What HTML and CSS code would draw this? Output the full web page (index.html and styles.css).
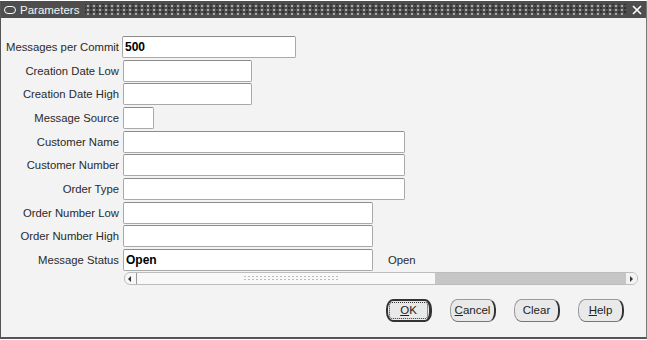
FILE: index.html
```html
<!DOCTYPE html>
<html lang="en">
  <head>
    <meta charset="UTF-8" />
    <title>Parameters</title>
    <link rel="stylesheet" href="styles.css">
  </head>
  <body>
    <div class="window">
      <div class="titlebar">
        <span class="title-icon"></span>
        <span class="title-text">Parameters</span>
        <span class="title-fill"></span>
        <span class="title-close">
          <svg width="10" height="10" viewBox="0 0 10 10">
            <path d="M1 1 L9 9 M9 1 L1 9" stroke="#fff" stroke-width="1.6" fill="none" />
          </svg>
        </span>
      </div>

      <div class="form">
        <div class="row">
          <label>Messages per Commit</label>
          <div class="field w-commit bold">500</div>
        </div>
        <div class="row">
          <label>Creation Date Low</label>
          <div class="field w-date"></div>
        </div>
        <div class="row">
          <label>Creation Date High</label>
          <div class="field w-date"></div>
        </div>
        <div class="row">
          <label>Message Source</label>
          <div class="field w-src"></div>
        </div>
        <div class="row">
          <label>Customer Name</label>
          <div class="field w-wide"></div>
        </div>
        <div class="row">
          <label>Customer Number</label>
          <div class="field w-wide"></div>
        </div>
        <div class="row">
          <label>Order Type</label>
          <div class="field w-wide"></div>
        </div>
        <div class="row">
          <label>Order Number Low</label>
          <div class="field w-num"></div>
        </div>
        <div class="row">
          <label>Order Number High</label>
          <div class="field w-num"></div>
        </div>
        <div class="row">
          <label>Message Status</label>
          <div class="field w-num bold">Open</div>
          <span class="extra">Open</span>
        </div>
      </div>

      <div class="scroll-row">
        <div class="scrollbar">
          <span class="arrow arrow-left"></span>
          <span class="thumb"><span class="grip"></span></span>
          <span class="track"></span>
          <span class="arrow arrow-right"></span>
        </div>
      </div>

      <div class="buttons">
        <button class="btn btn-default"><span class="focus"><u>O</u>K</span></button>
        <button class="btn"><u>C</u>ancel</button>
        <button class="btn">Clear</button>
        <button class="btn"><u>H</u>elp</button>
      </div>
    </div>
  </body>
</html>
```

FILE: styles.css
```css
body {
  margin: 0;
  background: #fff;
  font-family: "Liberation Sans", Arial, sans-serif;
  font-size: 12px;
  color: #222;
}

.window {
  width: 645px;
  height: 336px;
  margin-top: 1px;
  background: #f3f3f3;
  border-left: 1px solid #555;
  border-right: 1px solid #777;
  border-bottom: 2px solid #555;
}

.titlebar {
  height: 17px;
  background: #4e4e4e;
  display: flex;
  align-items: center;
  color: #fff;
}

.title-icon {
  width: 10px;
  height: 6px;
  margin-left: 3px;
  border: 1.5px solid #fff;
  border-radius: 5px;
}

.title-text {
  margin-left: 4px;
  font-size: 11.5px;
  color: #f4f4f4;
}

.title-fill {
  flex: 1;
  height: 11px;
  margin: 0 6px 0 6px;
  background-image:
    radial-gradient(circle, #a8a8a8 0.8px, transparent 1.1px),
    radial-gradient(circle, #2e2e2e 0.8px, transparent 1.1px);
  background-size: 6px 4px, 6px 4px;
  background-position: 0 0, 3px 2px;
}

.title-close {
  width: 12px;
  display: flex;
  align-items: center;
  margin-right: 2px;
}

.form {
  display: flex;
  flex-direction: column;
  gap: 1.67px;
  padding-top: 18px;
}

.row {
  display: flex;
  align-items: center;
  gap: 4px;
}

.row label {
  width: 118px;
  text-align: right;
  font-size: 11.3px;
  color: #2a2a2a;
  white-space: nowrap;
}

.field {
  height: 22px;
  line-height: 20px;
  background: #fff;
  border: 1px solid #a9a9a9;
  border-top-color: #8c8c8c;
  border-radius: 2px;
  padding-left: 2px;
  box-sizing: border-box;
}

.bold {
  font-weight: bold;
  color: #000;
}

.w-commit { width: 174px; margin-left: -1px; }
.w-date { width: 129px; }
.w-src { width: 31px; }
.w-wide { width: 282px; }
.w-num { width: 250px; }

.extra {
  margin-left: 11px;
  font-size: 11.3px;
  color: #2a2a2a;
}

.scroll-row {
  padding-left: 123px;
  margin-top: 1px;
}

.scrollbar {
  width: 514px;
  height: 13px;
  display: flex;
  border: 1px solid #bdbdbd;
  border-radius: 6px;
  box-sizing: border-box;
  background: #f7f7f7;
  overflow: hidden;
}

.arrow {
  width: 11px;
  position: relative;
}

.arrow::after {
  content: "";
  position: absolute;
  top: 3px;
  border-top: 3px solid transparent;
  border-bottom: 3px solid transparent;
}

.arrow-left {
  border-right: 1px solid #999;
}

.arrow-left::after {
  left: 3px;
  border-right: 3px solid #333;
}

.arrow-right {
  background: #f3f3f3;
}

.arrow-right::after {
  left: 4px;
  border-left: 3px solid #333;
}

.thumb {
  width: 298px;
  display: flex;
  justify-content: center;
  align-items: center;
  background: #f8f8f8;
}

.grip {
  width: 96px;
  height: 6px;
  margin-left: 10px;
  background-image: radial-gradient(circle, #bcbcbc 0.7px, transparent 1px);
  background-size: 4px 3px;
}

.track {
  flex: 1;
  background: #c6c6c6;
}

.buttons {
  display: flex;
  justify-content: flex-end;
  gap: 18px;
  padding-right: 22px;
  margin-top: 14px;
}

.btn {
  width: 46px;
  height: 23px;
  padding: 0;
  font-family: "Liberation Sans", Arial, sans-serif;
  font-size: 11.5px;
  color: #222;
  background: #e9e9e9;
  border: 1px solid #9a9a9a;
  border-right: 2px solid #333;
  border-bottom: 1px solid #777;
  border-radius: 7px / 10px;
}

.btn-default {
  border: 2px solid #333;
  border-right-width: 3px;
  padding: 1px;
}

.focus {
  display: flex;
  align-items: center;
  justify-content: center;
  height: 100%;
  border: 1px dotted #333;
  border-radius: 3px;
  box-sizing: border-box;
}
```
